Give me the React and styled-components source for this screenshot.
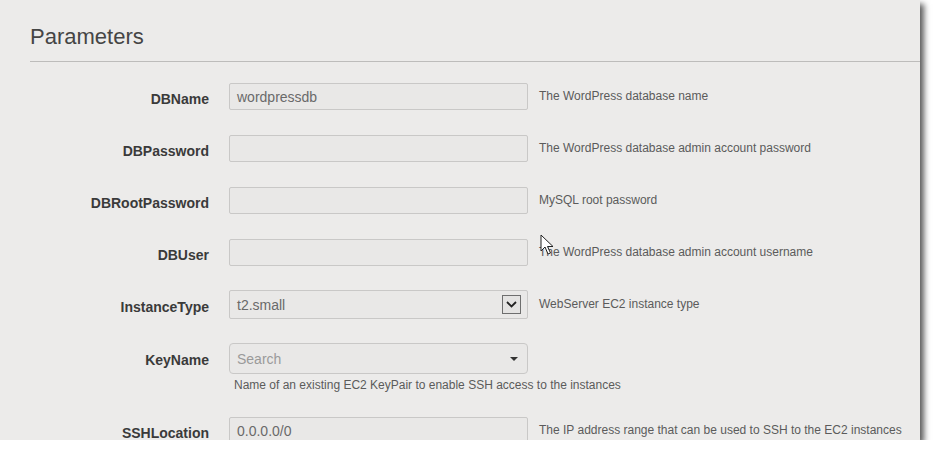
import React from "react";
import styled, { createGlobalStyle } from "styled-components";

const Global = createGlobalStyle`
  html, body { margin: 0; padding: 0; background: #ffffff; }
  body { font-family: "Liberation Sans", Arial, sans-serif; }
`;

const Frame = styled.div`
  position: relative;
  width: 920px;
  height: 440px;
  background: #ecebea;
  overflow: hidden;
  box-shadow: 4px 4px 6px rgba(0, 0, 0, 0.65);
`;

const Header = styled.div`
  margin-left: 30px;
  padding-top: 24px;
  padding-bottom: 11px;
  border-bottom: 1px solid #bdbcbb;
`;

const Title = styled.h2`
  margin: 0;
  font-size: 22px;
  line-height: 26px;
  font-weight: normal;
  color: #454545;
`;

const Form = styled.div`
  display: flex;
  flex-direction: column;
  gap: 25px;
  padding-top: 21px;
`;

const Row = styled.div`
  display: grid;
  grid-template-columns: 209px 319px auto;
  align-items: start;
  height: ${(p) => (p.$auto ? "auto" : "27px")};
`;

const Label = styled.div`
  text-align: right;
  font-size: 14px;
  font-weight: bold;
  color: #3a3a3a;
  line-height: 16px;
  padding-top: ${(p) => p.$top || 8}px;
`;

const Field = styled.div`
  grid-column: 2;
  margin-left: 20px;
  width: 299px;
  margin-top: ${(p) => p.$mt || 0}px;
`;

const Input = styled.div`
  box-sizing: border-box;
  width: 299px;
  height: ${(p) => p.$h || 27}px;
  border: 1px solid #c9c8c7;
  border-radius: ${(p) => p.$r || 2}px;
  background: #e9e8e7;
  display: flex;
  align-items: center;
  padding: 0 7px;
  font-size: 14px;
  color: ${(p) => (p.$placeholder ? "#9a9a9a" : "#6a6a6a")};
`;

const Value = styled.span`
  flex: 1;
`;

const SelectButton = styled.div`
  box-sizing: border-box;
  width: 19px;
  height: 19px;
  border: 1px solid #6e6e6e;
  background: #e4e3e2;
  display: flex;
  align-items: center;
  justify-content: center;
  margin-right: -1px;
`;

const Caret = styled.div`
  width: 0;
  height: 0;
  border-left: 4px solid transparent;
  border-right: 4px solid transparent;
  border-top: 4px solid #333;
  margin-right: 2px;
`;

const Help = styled.div`
  grid-column: 3;
  margin-left: 11px;
  font-size: 12px;
  line-height: 14px;
  color: #5b5b5b;
  padding-top: ${(p) => p.$top || 6}px;
  white-space: nowrap;
`;

const SubHelp = styled.div`
  grid-column: 2 / span 2;
  margin-left: 25px;
  margin-top: 4px;
  font-size: 12px;
  line-height: 14px;
  color: #5b5b5b;
  white-space: nowrap;
`;

const Cursor = styled.svg`
  position: absolute;
  left: 540px;
  top: 234px;
`;

const rows = [
  { label: "DBName", value: "wordpressdb", help: "The WordPress database name" },
  { label: "DBPassword", value: "", help: "The WordPress database admin account password" },
  { label: "DBRootPassword", value: "", help: "MySQL root password" },
  { label: "DBUser", value: "", help: "The WordPress database admin account username" },
];

export default function App() {
  return (
    <>
      <Global />
      <Frame>
        <Header>
          <Title>Parameters</Title>
        </Header>
        <Form>
          {rows.map((r) => (
            <Row key={r.label}>
              <Label>{r.label}</Label>
              <Field>
                <Input>
                  <Value>{r.value}</Value>
                </Input>
              </Field>
              <Help>{r.help}</Help>
            </Row>
          ))}
          <Row>
            <Label>InstanceType</Label>
            <Field $mt={-1}>
              <Input $h={29}>
                <Value>t2.small</Value>
                <SelectButton>
                  <svg width="11" height="7" viewBox="0 0 11 7">
                    <path d="M1 1 L5.5 5.5 L10 1" fill="none" stroke="#222" strokeWidth="1.8" />
                  </svg>
                </SelectButton>
              </Input>
            </Field>
            <Help>WebServer EC2 instance type</Help>
          </Row>
          <Row $auto>
            <Label $top={9}>KeyName</Label>
            <Field>
              <Input $h={31} $r={4} $placeholder>
                <Value>Search</Value>
                <Caret />
              </Input>
            </Field>
            <SubHelp>Name of an existing EC2 KeyPair to enable SSH access to the instances</SubHelp>
          </Row>
          <Row>
            <Label>SSHLocation</Label>
            <Field>
              <Input $h={28}>
                <Value>0.0.0.0/0</Value>
              </Input>
            </Field>
            <Help>The IP address range that can be used to SSH to the EC2 instances</Help>
          </Row>
        </Form>
        <Cursor width="14" height="22" viewBox="0 0 14 22">
          <path d="M1 1 L1 17 L5 13 L8 20 L10.5 19 L7.5 12.5 L13 12.5 Z" fill="#fff" stroke="#222" strokeWidth="1" strokeLinejoin="round" />
        </Cursor>
      </Frame>
    </>
  );
}
